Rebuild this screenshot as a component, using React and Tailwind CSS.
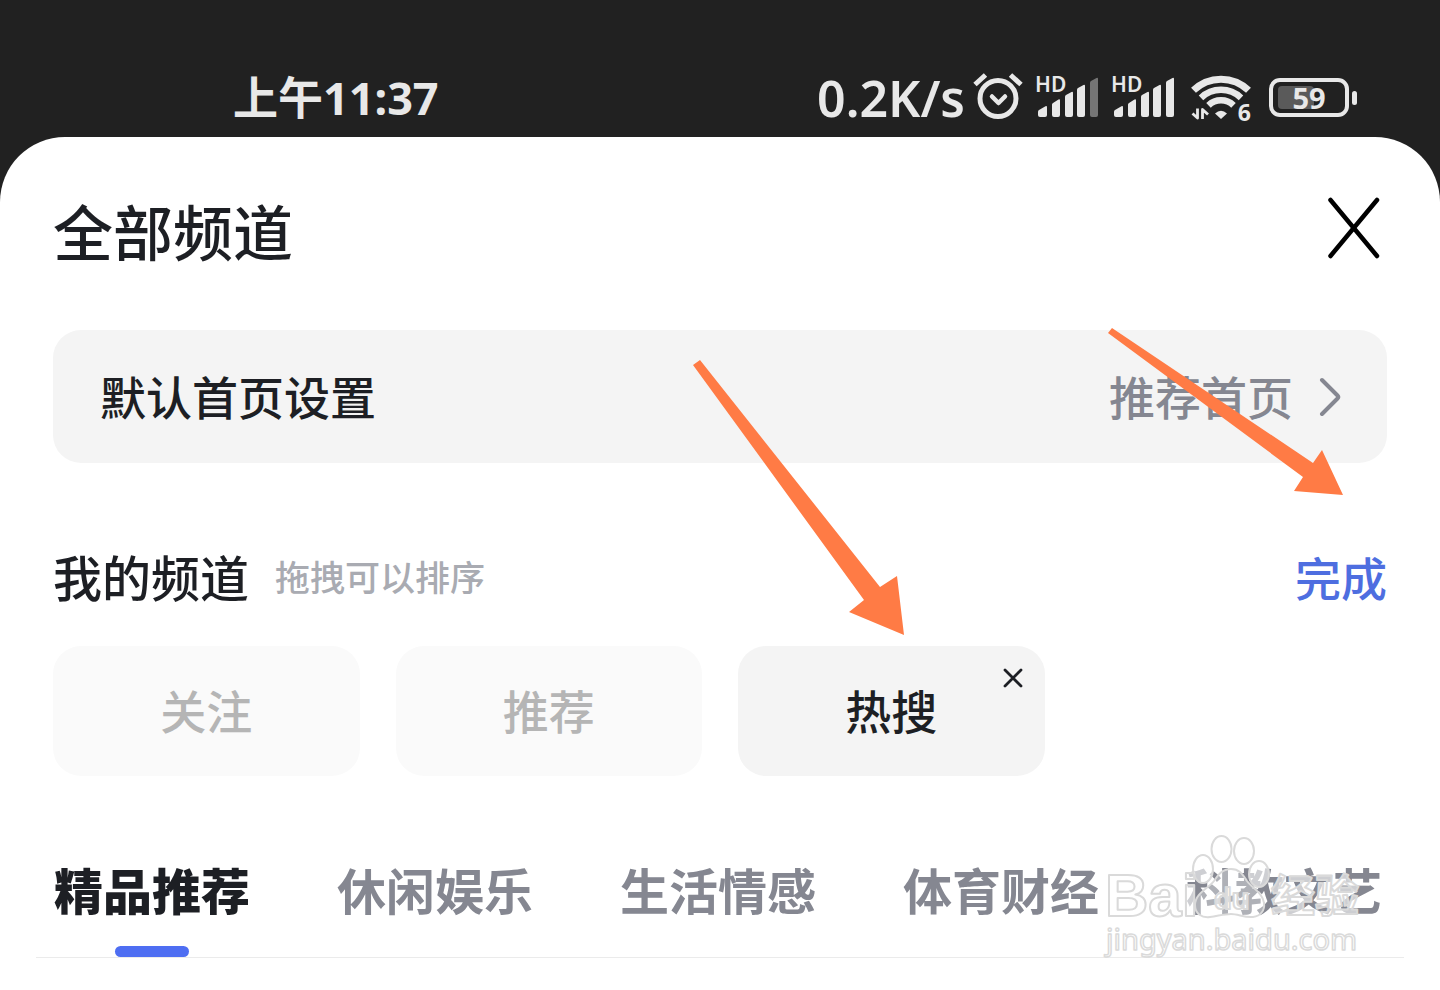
import React from "react";

const tabs = ["精品推荐", "休闲娱乐", "生活情感", "体育财经", "科教文艺"];

function AlarmIcon() {
  return (
    <svg className="h-12 w-[50px] overflow-visible" viewBox="0 0 50 48" fill="none" stroke="#e8e8e8" strokeLinecap="round" strokeLinejoin="round" aria-hidden="true">
      <circle cx="25" cy="24.500" r="18" strokeWidth="5" />
      <path d="M19 22.500l6.500 6.500 6.500-6.500" strokeWidth="4.500" />
      <path d="M2 10.500L12.500 1M37.500 1l10.500 9.500" strokeWidth="5" strokeLinecap="butt" />
    </svg>
  );
}

function SignalIcon({ weak }) {
  return (
    <span className="relative block h-12 w-16">
      <span className="absolute left-0 -top-1 font-['Noto_Sans'] text-[21px] font-semibold leading-[28px]">HD</span>
      <svg className="h-12 w-16" viewBox="0 0 64 48" fill="#e8e8e8" aria-hidden="true">
        <path d="M3 37.500q0-1 1-1.600l6.500-3.700q1.500-.7 1.500 1V41q0 2-2 2H5q-2 0-2-2z" />
        <path d="M17 30.500q0-1 1-1.600l5.500-3.500q1.500-.7 1.500 1V41q0 2-2 2h-4q-2 0-2-2z" />
        <path d="M30 22.500q0-1 1-1.600l5.500-3q1.500-.7 1.500 1V41q0 2-2 2h-4q-2 0-2-2z" />
        <path d="M42 15.500q0-1 1-1.600l5.500-3q1.500-.7 1.500 1V41q0 2-2 2h-4q-2 0-2-2z" />
        <path d="M55 8.500q0-1 1-1.600l5.500-3q1.500-.7 1.500 1V41q0 2-2 2h-4q-2 0-2-2z" fill={weak ? "#757575" : "#e8e8e8"} />
      </svg>
    </span>
  );
}

function WifiIcon() {
  return (
    <span className="relative block h-12 w-[60px]">
      <svg className="h-12 w-[60px]" viewBox="0 0 60 48" fill="none" stroke="#e8e8e8" strokeLinejoin="round" aria-hidden="true">
        <path d="M2.500 16.300a39.500 39.500 0 0 1 55 0" strokeWidth="7" />
        <path d="M10 23.800a29 29 0 0 1 40 0" strokeWidth="6.500" />
        <path d="M17.500 31.300a18 18 0 0 1 25 0" strokeWidth="6.500" />
        <path d="M24 39.500q6-5.500 12 0L30 45z" fill="#e8e8e8" stroke="none" />
        <path d="M1.500 39.500L6.500 44V34.500M11.500 45V35.500L17 40.500" strokeWidth="2.800" />
      </svg>
      <span className="absolute right-0 bottom-0 font-['Noto_Sans'] text-[23px] font-bold leading-[20px]">6</span>
    </span>
  );
}

function Battery() {
  return (
    <span className="flex items-center gap-[3px]">
      <span className="relative flex h-[39px] w-20 items-center justify-center rounded-[11px] border-4 border-[#e8e8e8]">
        <span className="absolute bottom-1 left-[5px] top-1 w-9 rounded-[4px] bg-[#5a5a5a]" />
        <span className="relative font-['Noto_Sans'] text-[29px] font-bold leading-none">59</span>
      </span>
      <span className="h-[14px] w-[5px] rounded-full bg-[#e8e8e8]" />
    </span>
  );
}

function Watermark() {
  return (
    <svg
      className="pointer-events-none absolute right-[72px] top-[694px] h-32 w-[268px]"
      viewBox="1100 831 268 128"
      fill="#ffffff"
      fillOpacity="0.6"
      stroke="#dadada"
      strokeWidth="2"
      strokeLinejoin="round"
      aria-hidden="true"
    >
      <text x="1105" y="916" fontFamily="Liberation Sans" fontWeight="700" fontSize="60">Bai</text>
      <ellipse cx="1203" cy="869" rx="10" ry="14" />
      <ellipse cx="1221.500" cy="849" rx="10" ry="13" />
      <ellipse cx="1244" cy="851" rx="10" ry="13" />
      <ellipse cx="1259" cy="874" rx="10" ry="13" />
      <path fillOpacity="0.35" d="M1231 869c-9 0-13 6-17 12-5 7-19 12-19 24 0 9 7 13 15 12 8-1 14-3 21-3s14 4 22 3c8-1 12-7 11-14-1-10-12-15-17-22-4-6-7-12-16-12z" />
      <text x="1214" y="909" fontFamily="Liberation Sans" fontWeight="700" fontSize="29">du</text>
      <text x="1271" y="912" fontFamily="Noto Sans CJK SC" fontWeight="700" fontSize="44">经验</text>
      <text x="1106" y="950" fontFamily="Noto Sans" fontSize="29" strokeWidth="1.500">jingyan.baidu.com</text>
    </svg>
  );
}

export default function App() {
  return (
    <div className="flex min-h-screen flex-col bg-[#212121] font-['Noto_Sans_CJK_SC',sans-serif] text-[#1d1f24]" lang="zh-CN">
      <header className="flex h-[137px] items-center justify-between pl-[233px] pr-[83px] pt-[58px] text-[#e8e8e8]">
        <span className="font-['Noto_Sans','Noto_Sans_CJK_SC',sans-serif] text-[45px] font-bold leading-none">上午11:37</span>
        <div className="flex items-center">
          <span className="mr-2 font-['Noto_Sans'] text-[50px] font-semibold leading-none">0.2K/s</span>
          <AlarmIcon />
          <span className="ml-3 flex gap-3">
            <SignalIcon weak />
            <SignalIcon />
          </span>
          <span className="ml-4 mr-[18px]">
            <WifiIcon />
          </span>
          <Battery />
        </div>
      </header>

      <main className="relative grow rounded-t-[65px] bg-white px-9 pt-[57px]">
        <div className="px-[17px]">
          <div className="flex items-center justify-between">
            <h1 className="text-[60px] font-medium leading-[72px]">全部频道</h1>
            <button type="button" aria-label="关闭" className="pb-1 pr-[5px]">
              <svg className="h-16 w-14" viewBox="0 0 56 64" fill="none" stroke="#000" strokeWidth="4.500" strokeLinecap="round">
                <path d="M4.500 4L51 60M51 4L4.500 60" />
              </svg>
            </button>
          </div>

          <button type="button" className="mt-16 flex h-[133px] w-full items-center justify-between rounded-[28px] bg-[#f4f4f4] pb-1 pl-[47px] pr-[46px] text-[46px] font-medium leading-[60px]">
            <span>默认首页设置</span>
            <span className="flex items-center gap-[26px] text-[#858791]">
              推荐首页
              <svg className="mt-1 h-10 w-[22px]" viewBox="0 0 22 40" fill="none" stroke="currentColor" strokeWidth="4" strokeLinecap="round" strokeLinejoin="round" aria-hidden="true">
                <path d="M3 3l15.500 15.500q1.500 1.500 0 3L3 37" />
              </svg>
            </span>
          </button>

          <div className="mt-[83px] flex items-center justify-between leading-[60px]">
            <div className="flex items-center gap-[26px]">
              <h2 className="text-[49px] font-medium">我的频道</h2>
              <span className="text-[35px] font-medium text-[#a9abb2]">拖拽可以排序</span>
            </div>
            <button type="button" className="text-[46px] font-medium text-[#4e6ee0]">完成</button>
          </div>

          <div className="mt-10 grid grid-cols-4 gap-9 text-[46px] font-medium">
            <button type="button" className="h-[130px] rounded-[28px] bg-[#fafafa] pb-1 text-[#b5b5b5]">关注</button>
            <button type="button" className="h-[130px] rounded-[28px] bg-[#fafafa] pb-1 text-[#b5b5b5]">推荐</button>
            <div className="relative flex h-[130px] items-center justify-center rounded-[28px] bg-[#f4f4f4] pb-1">
              热搜
              <button type="button" aria-label="删除热搜" className="absolute right-5 top-5">
                <svg className="h-6 w-6" viewBox="0 0 24 24" fill="none" stroke="#1d1f24" strokeWidth="2.800" strokeLinecap="round">
                  <path d="M4 4l16 16M20 4L4 20" />
                </svg>
              </button>
            </div>
          </div>
        </div>

        <nav className="mt-[83px] flex justify-between gap-4 border-b border-[#ebebeb] pl-[18px] pr-[22px] text-[49px] leading-[60px]">
          {tabs.map((t, i) => (
            <button
              key={t}
              type="button"
              className={i === 0 ? "flex flex-col items-center gap-[27px] whitespace-nowrap font-black" : "flex flex-col items-center gap-[27px] whitespace-nowrap font-bold text-[#858791]"}
            >
              {t}
              {i === 0 && <span className="h-[11px] w-[74px] rounded-full bg-[#4e6ef2]" />}
            </button>
          ))}
        </nav>

        <svg className="pointer-events-none absolute left-[693px] top-[223px] h-[276px] w-[212px]" viewBox="693 360 212 276" fill="#ff7b45" aria-hidden="true">
          <path d="M693 365l7-5 180 227 17-11 7 59-55-23 15-12z" />
        </svg>
        <svg className="pointer-events-none absolute right-24 top-[191px] h-[168px] w-[236px]" viewBox="1108 328 236 168" fill="#ff7b45" aria-hidden="true">
          <path d="M1108 333l4-5 201 135 9-13 21 45-49-4 9-14z" />
        </svg>
        <Watermark />
      </main>
    </div>
  );
}
